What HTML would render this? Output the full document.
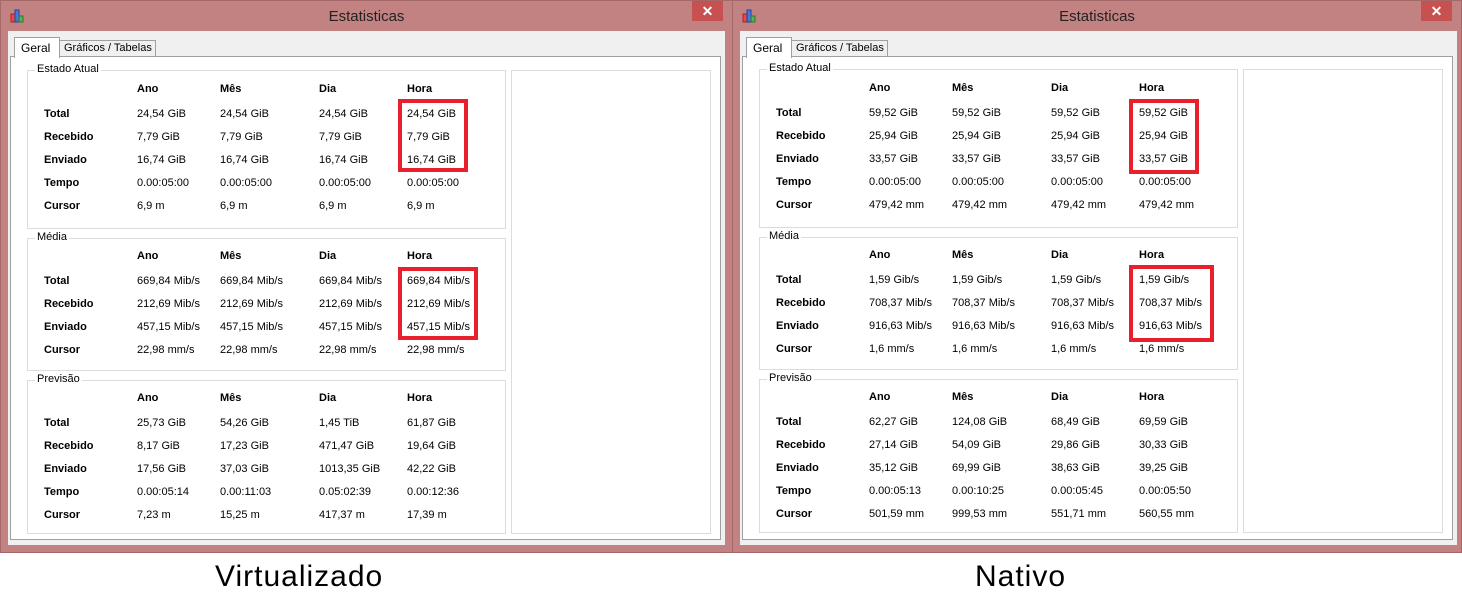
<!DOCTYPE html>
<html><head><meta charset="utf-8"><style>
body{margin:0;width:1462px;height:611px;background:#fff;position:relative;overflow:hidden;font-family:"Liberation Sans",sans-serif;}
.win{position:absolute;top:0;width:733px;height:553px;background:#c38282;box-sizing:border-box;border:1px solid #a46868;}
.title{position:absolute;top:7px;left:0;width:100%;text-align:center;font-size:15px;color:#222;}
.close{position:absolute;top:0;right:9px;width:31px;height:20px;background:#c75050;color:#fff;text-align:center;font-size:14px;line-height:20px;font-weight:bold;}
.icon{position:absolute;left:9px;top:8px;width:16px;height:14px;}
.client{position:absolute;left:7px;top:30px;width:717px;height:514px;background:#f0f0f0;}
.page{position:absolute;left:2px;top:25px;width:711px;height:484px;background:#fff;border:1px solid #a0a0a0;box-sizing:border-box;}
.tab{position:absolute;font-size:12px;color:#000;box-sizing:border-box;border:1px solid #a0a0a0;white-space:nowrap;}
.t1{left:6px;top:6px;width:46px;height:21px;background:#fff;border-bottom:none;padding:3px 0 0 6px;z-index:2;}
.t2{left:51px;top:9px;width:97px;height:17px;background:#f0f0f0;padding:1px 0 0 4px;font-size:11px;}
.grp{position:absolute;border:1px solid #dcdcdc;}
.gl{position:absolute;top:-8px;left:7px;background:#fff;padding:0 2px;font-size:11px;color:#000;}
.c{position:absolute;font-size:11px;color:#000;white-space:nowrap;}
.b{font-weight:bold;}
.red{position:absolute;border:4px solid #e8202a;box-sizing:border-box;}
.cap{position:absolute;top:560px;font-size:30px;color:#000;letter-spacing:1px;}
</style></head><body>

<div class="win" style="left:0">
<svg class="icon" viewBox="0 0 16 14"><rect x="1" y="5" width="4" height="8" fill="#e84848" stroke="#b02020"/><rect x="5" y="1" width="4" height="12" fill="#4a78d8" stroke="#2040a0"/><rect x="9" y="7" width="4" height="6" fill="#58b058" stroke="#2a7a2a"/></svg>
<div class="title">Estatisticas</div><div class="close">✕</div>
<div class="client">
<div class="tab t2">Gráficos / Tabelas</div><div class="tab t1">Geral</div>
<div class="page"></div>
</div>
<div class="grp" style="left:26px;top:69px;width:477px;height:157px;background:#fff"><span class="gl">Estado Atual</span></div>
<div class="grp" style="left:26px;top:237px;width:477px;height:131px"><span class="gl">Média</span></div>
<div class="grp" style="left:26px;top:379px;width:477px;height:152px"><span class="gl">Previsão</span></div>
<div class="grp" style="left:510px;top:69px;width:198px;height:462px"></div>
<div class="c b" style="left:136px;top:82px">Ano</div><div class="c b" style="left:219px;top:82px">Mês</div><div class="c b" style="left:318px;top:82px">Dia</div><div class="c b" style="left:406px;top:82px">Hora</div>
<div class="c b" style="left:43px;top:107px">Total</div><div class="c" style="left:136px;top:107px">24,54 GiB</div><div class="c" style="left:219px;top:107px">24,54 GiB</div><div class="c" style="left:318px;top:107px">24,54 GiB</div><div class="c" style="left:406px;top:107px">24,54 GiB</div>
<div class="c b" style="left:43px;top:130px">Recebido</div><div class="c" style="left:136px;top:130px">7,79 GiB</div><div class="c" style="left:219px;top:130px">7,79 GiB</div><div class="c" style="left:318px;top:130px">7,79 GiB</div><div class="c" style="left:406px;top:130px">7,79 GiB</div>
<div class="c b" style="left:43px;top:153px">Enviado</div><div class="c" style="left:136px;top:153px">16,74 GiB</div><div class="c" style="left:219px;top:153px">16,74 GiB</div><div class="c" style="left:318px;top:153px">16,74 GiB</div><div class="c" style="left:406px;top:153px">16,74 GiB</div>
<div class="c b" style="left:43px;top:176px">Tempo</div><div class="c" style="left:136px;top:176px">0.00:05:00</div><div class="c" style="left:219px;top:176px">0.00:05:00</div><div class="c" style="left:318px;top:176px">0.00:05:00</div><div class="c" style="left:406px;top:176px">0.00:05:00</div>
<div class="c b" style="left:43px;top:199px">Cursor</div><div class="c" style="left:136px;top:199px">6,9 m</div><div class="c" style="left:219px;top:199px">6,9 m</div><div class="c" style="left:318px;top:199px">6,9 m</div><div class="c" style="left:406px;top:199px">6,9 m</div>
<div class="red" style="left:397px;top:98px;width:70px;height:73px"></div>
<div class="c b" style="left:136px;top:249px">Ano</div><div class="c b" style="left:219px;top:249px">Mês</div><div class="c b" style="left:318px;top:249px">Dia</div><div class="c b" style="left:406px;top:249px">Hora</div>
<div class="c b" style="left:43px;top:274px">Total</div><div class="c" style="left:136px;top:274px">669,84 Mib/s</div><div class="c" style="left:219px;top:274px">669,84 Mib/s</div><div class="c" style="left:318px;top:274px">669,84 Mib/s</div><div class="c" style="left:406px;top:274px">669,84 Mib/s</div>
<div class="c b" style="left:43px;top:297px">Recebido</div><div class="c" style="left:136px;top:297px">212,69 Mib/s</div><div class="c" style="left:219px;top:297px">212,69 Mib/s</div><div class="c" style="left:318px;top:297px">212,69 Mib/s</div><div class="c" style="left:406px;top:297px">212,69 Mib/s</div>
<div class="c b" style="left:43px;top:320px">Enviado</div><div class="c" style="left:136px;top:320px">457,15 Mib/s</div><div class="c" style="left:219px;top:320px">457,15 Mib/s</div><div class="c" style="left:318px;top:320px">457,15 Mib/s</div><div class="c" style="left:406px;top:320px">457,15 Mib/s</div>
<div class="c b" style="left:43px;top:343px">Cursor</div><div class="c" style="left:136px;top:343px">22,98 mm/s</div><div class="c" style="left:219px;top:343px">22,98 mm/s</div><div class="c" style="left:318px;top:343px">22,98 mm/s</div><div class="c" style="left:406px;top:343px">22,98 mm/s</div>
<div class="red" style="left:397px;top:266px;width:80px;height:73px"></div>
<div class="c b" style="left:136px;top:391px">Ano</div><div class="c b" style="left:219px;top:391px">Mês</div><div class="c b" style="left:318px;top:391px">Dia</div><div class="c b" style="left:406px;top:391px">Hora</div>
<div class="c b" style="left:43px;top:416px">Total</div><div class="c" style="left:136px;top:416px">25,73 GiB</div><div class="c" style="left:219px;top:416px">54,26 GiB</div><div class="c" style="left:318px;top:416px">1,45 TiB</div><div class="c" style="left:406px;top:416px">61,87 GiB</div>
<div class="c b" style="left:43px;top:439px">Recebido</div><div class="c" style="left:136px;top:439px">8,17 GiB</div><div class="c" style="left:219px;top:439px">17,23 GiB</div><div class="c" style="left:318px;top:439px">471,47 GiB</div><div class="c" style="left:406px;top:439px">19,64 GiB</div>
<div class="c b" style="left:43px;top:462px">Enviado</div><div class="c" style="left:136px;top:462px">17,56 GiB</div><div class="c" style="left:219px;top:462px">37,03 GiB</div><div class="c" style="left:318px;top:462px">1013,35 GiB</div><div class="c" style="left:406px;top:462px">42,22 GiB</div>
<div class="c b" style="left:43px;top:485px">Tempo</div><div class="c" style="left:136px;top:485px">0.00:05:14</div><div class="c" style="left:219px;top:485px">0.00:11:03</div><div class="c" style="left:318px;top:485px">0.05:02:39</div><div class="c" style="left:406px;top:485px">0.00:12:36</div>
<div class="c b" style="left:43px;top:508px">Cursor</div><div class="c" style="left:136px;top:508px">7,23 m</div><div class="c" style="left:219px;top:508px">15,25 m</div><div class="c" style="left:318px;top:508px">417,37 m</div><div class="c" style="left:406px;top:508px">17,39 m</div>
</div>

<div class="win" style="left:732px;width:730px">
<svg class="icon" viewBox="0 0 16 14"><rect x="1" y="5" width="4" height="8" fill="#e84848" stroke="#b02020"/><rect x="5" y="1" width="4" height="12" fill="#4a78d8" stroke="#2040a0"/><rect x="9" y="7" width="4" height="6" fill="#58b058" stroke="#2a7a2a"/></svg>
<div class="title">Estatisticas</div><div class="close">✕</div>
<div class="client">
<div class="tab t2">Gráficos / Tabelas</div><div class="tab t1">Geral</div>
<div class="page"></div>
</div>
<div class="grp" style="left:26px;top:68px;width:477px;height:157px"><span class="gl">Estado Atual</span></div>
<div class="grp" style="left:26px;top:236px;width:477px;height:131px"><span class="gl">Média</span></div>
<div class="grp" style="left:26px;top:378px;width:477px;height:152px"><span class="gl">Previsão</span></div>
<div class="grp" style="left:510px;top:68px;width:198px;height:462px"></div>
<div class="c b" style="left:136px;top:81px">Ano</div><div class="c b" style="left:219px;top:81px">Mês</div><div class="c b" style="left:318px;top:81px">Dia</div><div class="c b" style="left:406px;top:81px">Hora</div>
<div class="c b" style="left:43px;top:106px">Total</div><div class="c" style="left:136px;top:106px">59,52 GiB</div><div class="c" style="left:219px;top:106px">59,52 GiB</div><div class="c" style="left:318px;top:106px">59,52 GiB</div><div class="c" style="left:406px;top:106px">59,52 GiB</div>
<div class="c b" style="left:43px;top:129px">Recebido</div><div class="c" style="left:136px;top:129px">25,94 GiB</div><div class="c" style="left:219px;top:129px">25,94 GiB</div><div class="c" style="left:318px;top:129px">25,94 GiB</div><div class="c" style="left:406px;top:129px">25,94 GiB</div>
<div class="c b" style="left:43px;top:152px">Enviado</div><div class="c" style="left:136px;top:152px">33,57 GiB</div><div class="c" style="left:219px;top:152px">33,57 GiB</div><div class="c" style="left:318px;top:152px">33,57 GiB</div><div class="c" style="left:406px;top:152px">33,57 GiB</div>
<div class="c b" style="left:43px;top:175px">Tempo</div><div class="c" style="left:136px;top:175px">0.00:05:00</div><div class="c" style="left:219px;top:175px">0.00:05:00</div><div class="c" style="left:318px;top:175px">0.00:05:00</div><div class="c" style="left:406px;top:175px">0.00:05:00</div>
<div class="c b" style="left:43px;top:198px">Cursor</div><div class="c" style="left:136px;top:198px">479,42 mm</div><div class="c" style="left:219px;top:198px">479,42 mm</div><div class="c" style="left:318px;top:198px">479,42 mm</div><div class="c" style="left:406px;top:198px">479,42 mm</div>
<div class="red" style="left:396px;top:98px;width:70px;height:75px"></div>
<div class="c b" style="left:136px;top:248px">Ano</div><div class="c b" style="left:219px;top:248px">Mês</div><div class="c b" style="left:318px;top:248px">Dia</div><div class="c b" style="left:406px;top:248px">Hora</div>
<div class="c b" style="left:43px;top:273px">Total</div><div class="c" style="left:136px;top:273px">1,59 Gib/s</div><div class="c" style="left:219px;top:273px">1,59 Gib/s</div><div class="c" style="left:318px;top:273px">1,59 Gib/s</div><div class="c" style="left:406px;top:273px">1,59 Gib/s</div>
<div class="c b" style="left:43px;top:296px">Recebido</div><div class="c" style="left:136px;top:296px">708,37 Mib/s</div><div class="c" style="left:219px;top:296px">708,37 Mib/s</div><div class="c" style="left:318px;top:296px">708,37 Mib/s</div><div class="c" style="left:406px;top:296px">708,37 Mib/s</div>
<div class="c b" style="left:43px;top:319px">Enviado</div><div class="c" style="left:136px;top:319px">916,63 Mib/s</div><div class="c" style="left:219px;top:319px">916,63 Mib/s</div><div class="c" style="left:318px;top:319px">916,63 Mib/s</div><div class="c" style="left:406px;top:319px">916,63 Mib/s</div>
<div class="c b" style="left:43px;top:342px">Cursor</div><div class="c" style="left:136px;top:342px">1,6 mm/s</div><div class="c" style="left:219px;top:342px">1,6 mm/s</div><div class="c" style="left:318px;top:342px">1,6 mm/s</div><div class="c" style="left:406px;top:342px">1,6 mm/s</div>
<div class="red" style="left:396px;top:264px;width:85px;height:77px"></div>
<div class="c b" style="left:136px;top:390px">Ano</div><div class="c b" style="left:219px;top:390px">Mês</div><div class="c b" style="left:318px;top:390px">Dia</div><div class="c b" style="left:406px;top:390px">Hora</div>
<div class="c b" style="left:43px;top:415px">Total</div><div class="c" style="left:136px;top:415px">62,27 GiB</div><div class="c" style="left:219px;top:415px">124,08 GiB</div><div class="c" style="left:318px;top:415px">68,49 GiB</div><div class="c" style="left:406px;top:415px">69,59 GiB</div>
<div class="c b" style="left:43px;top:438px">Recebido</div><div class="c" style="left:136px;top:438px">27,14 GiB</div><div class="c" style="left:219px;top:438px">54,09 GiB</div><div class="c" style="left:318px;top:438px">29,86 GiB</div><div class="c" style="left:406px;top:438px">30,33 GiB</div>
<div class="c b" style="left:43px;top:461px">Enviado</div><div class="c" style="left:136px;top:461px">35,12 GiB</div><div class="c" style="left:219px;top:461px">69,99 GiB</div><div class="c" style="left:318px;top:461px">38,63 GiB</div><div class="c" style="left:406px;top:461px">39,25 GiB</div>
<div class="c b" style="left:43px;top:484px">Tempo</div><div class="c" style="left:136px;top:484px">0.00:05:13</div><div class="c" style="left:219px;top:484px">0.00:10:25</div><div class="c" style="left:318px;top:484px">0.00:05:45</div><div class="c" style="left:406px;top:484px">0.00:05:50</div>
<div class="c b" style="left:43px;top:507px">Cursor</div><div class="c" style="left:136px;top:507px">501,59 mm</div><div class="c" style="left:219px;top:507px">999,53 mm</div><div class="c" style="left:318px;top:507px">551,71 mm</div><div class="c" style="left:406px;top:507px">560,55 mm</div>
</div>

<div class="cap" style="left:215px">Virtualizado</div>
<div class="cap" style="left:975px">Nativo</div>
</body></html>
